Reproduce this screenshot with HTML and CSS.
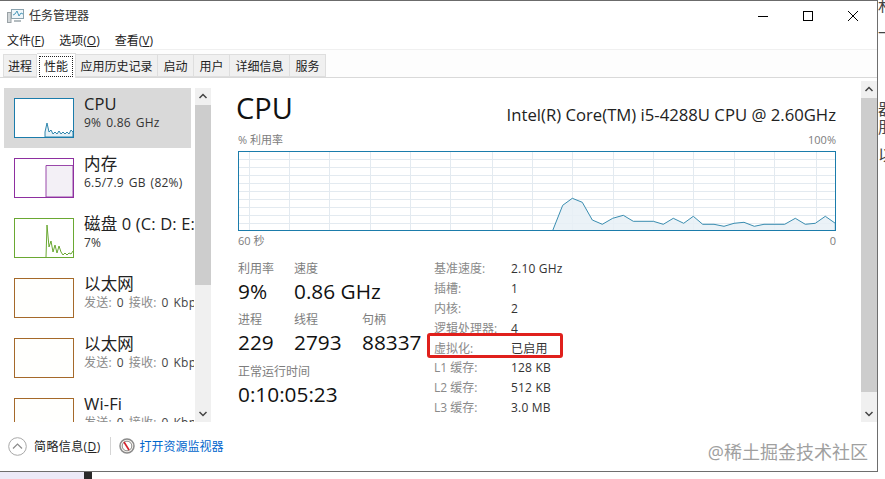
FILE: index.html
```html
<!DOCTYPE html>
<html lang="zh">
<head>
<meta charset="utf-8">
<title>任务管理器</title>
<link rel="stylesheet" href="styles.css">
</head>
<body>
<div class="desktop">
  <div class="window">
    <header class="titlebar">
      <svg class="app-icon" viewBox="0 0 17 14"><rect x="4.500" y="0.500" width="12" height="9" fill="#f0f7fb" stroke="#8ba3af"/><path d="M6 6l2-1 2-3 2 5 2-3 2 1" fill="none" stroke="#4a9abb"/><rect x="0.500" y="3.500" width="3.500" height="10" fill="#d2d7d9" stroke="#9aa2a6"/><path d="M7 11h7v2H7z" fill="#b4bcc0"/></svg>
      <span class="title">任务管理器</span>
      <div class="controls">
        <svg class="ctl" viewBox="0 0 46 30"><path d="M18 15.500h10" stroke="#000"/></svg>
        <svg class="ctl" viewBox="0 0 46 30"><rect x="18.500" y="10.500" width="9" height="9" fill="none" stroke="#000"/></svg>
        <svg class="ctl" viewBox="0 0 46 30"><path d="M18 10l10 10M28 10L18 20" stroke="#000"/></svg>
      </div>
    </header>
    <nav class="menu"><span>文件(<u>F</u>)</span><span>选项(<u>O</u>)</span><span>查看(<u>V</u>)</span></nav>
    <div class="tabs">
      <span class="tab">进程</span>
      <span class="tab active"><span class="focus">性能</span></span>
      <span class="tab">应用历史记录</span>
      <span class="tab">启动</span>
      <span class="tab">用户</span>
      <span class="tab">详细信息</span>
      <span class="tab">服务</span>
    </div>
    <main class="main">
      <aside class="side">
        <div class="list">
          <div class="item selected">
            <svg class="thumb cpu" viewBox="0 0 58 38"><path d="M30 38V33L32 24 34 33 36 31 38 35 40 33 42 35 44 32 46 35 48 33 50 35 52 33 54 35 56 31 58 33V38Z" fill="#e6f1f7" stroke="#2f86ad"/></svg>
            <div class="meta"><div class="name">CPU</div><div class="sub dark">9% 0.86 GHz</div></div>
          </div>
          <div class="item">
            <svg class="thumb mem" viewBox="0 0 58 38"><path d="M31 38V6.500H58V38Z" fill="#f3f0f6" stroke="#9a48aa"/></svg>
            <div class="meta"><div class="name">内存</div><div class="sub dark">6.5/7.9 GB (82%)</div></div>
          </div>
          <div class="item">
            <svg class="thumb disk" viewBox="0 0 58 38"><path d="M31 38L32 6 34 28 36 22 38 33 40 26 42 34 44 27 46 33 48 36 50 34 52 36 54 34 56 35 58 32" fill="none" stroke="#6aa832"/></svg>
            <div class="meta"><div class="name">磁盘 0 (C: D: E:</div><div class="sub dark">7%</div></div>
          </div>
          <div class="item">
            <div class="thumb net"></div>
            <div class="meta"><div class="name">以太网</div><div class="sub"><span class="soft">发送:</span> 0 <span class="soft">接收:</span> 0 Kbps</div></div>
          </div>
          <div class="item">
            <div class="thumb net"></div>
            <div class="meta"><div class="name">以太网</div><div class="sub"><span class="soft">发送:</span> 0 <span class="soft">接收:</span> 0 Kbps</div></div>
          </div>
          <div class="item">
            <div class="thumb net"></div>
            <div class="meta"><div class="name">Wi-Fi</div><div class="sub"><span class="soft">发送:</span> 0 <span class="soft">接收:</span> 0 Kbps</div></div>
          </div>
        </div>
        <div class="scrollbar short">
          <svg class="arrow" viewBox="0 0 16 17"><path d="M4.500 10L8 6.500 11.500 10" fill="none" stroke="#444" stroke-width="1.500"/></svg>
          <div class="track"><div class="bar"></div></div>
          <svg class="arrow" viewBox="0 0 16 17"><path d="M4.500 7L8 10.500 11.500 7" fill="none" stroke="#444" stroke-width="1.500"/></svg>
        </div>
      </aside>
      <section class="panel">
        <div class="head"><h1>CPU</h1><div class="model">Intel(R) Core(TM) i5-4288U CPU @ 2.60GHz</div></div>
        <div class="axis top"><span>% 利用率</span><span>100%</span></div>
        <svg class="chart" viewBox="238 151 598 80">
          <rect x="238.500" y="151.500" width="597" height="79" fill="#fff"/>
          <path class="grid" d="M239 159.500H835M239 167.500H835M239 175.500H835M239 183.500H835M239 191.500H835M239 199.500H835M239 207.500H835M239 215.500H835M239 223.500H835M249.500 152V230M289.500 152V230M329.500 152V230M370.500 152V230M410.500 152V230M450.500 152V230M492.500 152V230M532.500 152V230M572.500 152V230M613.500 152V230M653.500 152V230M693.500 152V230M734.500 152V230M774.500 152V230M816.500 152V230"/>
          <path class="load" d="M552.700 230.500L562.700 205.300 572.300 198.300 582.300 202.300 592.300 220 602.300 224.300 612.700 218.300 623.300 215.300 633.300 221.300 653.300 221.300 663.300 224.300 673.300 218.300 683.700 223.300 693.300 216.300 702.700 224.300 714 224.300 724 226.300 734 223.300 744 222.300 754.300 226.300 764 224.300 784.700 224.300 795.300 218.300 805.300 224.300 815.300 223.300 825.300 216.300 835.300 223.300V230.500Z"/>
          <rect class="frame" x="238.500" y="151.500" width="597" height="79"/>
        </svg>
        <div class="axis bottom"><span>60 秒</span><span>0</span></div>
        <div class="stats">
          <div class="live">
            <div class="row r1">
              <div class="stat"><label>利用率</label><b>9%</b></div>
              <div class="stat"><label>速度</label><b>0.86 GHz</b></div>
            </div>
            <div class="row r2">
              <div class="stat"><label>进程</label><b>229</b></div>
              <div class="stat"><label>线程</label><b>2793</b></div>
              <div class="stat"><label>句柄</label><b>88337</b></div>
            </div>
            <div class="stat"><label>正常运行时间</label><b>0:10:05:23</b></div>
          </div>
          <dl class="specs">
            <dt>基准速度:</dt><dd>2.10 GHz</dd>
            <dt>插槽:</dt><dd>1</dd>
            <dt>内核:</dt><dd>2</dd>
            <dt>逻辑处理器:</dt><dd>4</dd>
            <dt>虚拟化:</dt><dd>已启用</dd>
            <dt>L1 缓存:</dt><dd>128 KB</dd>
            <dt>L2 缓存:</dt><dd>512 KB</dd>
            <dt>L3 缓存:</dt><dd>3.0 MB</dd>
          </dl>
        </div>
        <div class="scrollbar tall">
          <svg class="arrow" viewBox="0 0 16 17"><path d="M4.500 10L8 6.500 11.500 10" fill="none" stroke="#444" stroke-width="1.500"/></svg>
          <div class="track"><div class="bar"></div></div>
          <svg class="arrow" viewBox="0 0 16 17"><path d="M4.500 7L8 10.500 11.500 7" fill="none" stroke="#444" stroke-width="1.500"/></svg>
        </div>
      </section>
    </main>
    <footer class="footer">
      <svg class="fold" viewBox="0 0 19 19"><circle cx="9.500" cy="9.500" r="8.800" fill="#fff" stroke="#a8a8a8"/><path d="M5 11.500L9.500 7 14 11.500" fill="none" stroke="#8c8c8c" stroke-width="1.200"/></svg>
      <span class="brief">简略信息(<u>D</u>)</span>
      <i class="sep"></i>
      <svg class="gauge" viewBox="0 0 16 16"><circle cx="8" cy="8" r="7" fill="#f6f3ee" stroke="#8a8a8a" stroke-width="1.500"/><circle cx="8" cy="8" r="4.800" fill="#fff" stroke="#444" stroke-width=".6"/><path d="M5 4l5 8" stroke="#d4202a" stroke-width="1.600"/></svg>
      <a class="monitor">打开资源监视器</a>
    </footer>
    <div class="watermark">@稀土掘金技术社区</div>
    <div class="redbox"></div>
  </div>
  <div class="behind"><div class="f1">和</div><div class="f2">一</div><div class="f3">器</div><div class="f4">朋</div><div class="f5">以何</div></div>
</div>
<div class="strip"><i class="lav"></i><i class="blk"></i></div>
</body>
</html>
```
FILE: styles.css
```css
* { box-sizing: border-box; }
html, body { margin: 0; padding: 0; }
body { width: 885px; height: 479px; overflow: hidden; background: #fff; font-family: "Open Sans", "Noto Sans CJK SC", sans-serif; font-size: 12px; color: #1a1a1a; }
.desktop { display: flex; height: 472px; }
.window { position: relative; flex: none; width: 878px; height: 472px; display: flex; flex-direction: column; background: #fff; border-top: 1px solid #6b6b6b; border-right: 1px solid #6e6e6e; border-bottom: 1px solid #6e6e6e; }
.behind { width: 7px; overflow: hidden; font-size: 16px; line-height: 16px; color: #444; white-space: nowrap; }
.f1 { margin-top: -3px; }
.f2 { margin-top: 12px; }
.f3 { margin-top: 60px; }
.f4 { margin-top: 2px; }
.f5 { margin-top: 12px; }
.strip { display: flex; height: 7px; }
.strip i { display: block; height: 7px; }
.lav { width: 84px; background: #eceaf8; }
.blk { width: 8px; background: #2a2a2a; }

.titlebar { display: flex; align-items: center; height: 29px; padding: 0 0 2px 7px; flex: none; }
.app-icon { width: 17px; height: 14px; margin-top: 3px; }
.title { margin-left: 5px; color: #333; }
.controls { margin-left: auto; display: flex; margin-right: 1px; margin-top: 2px; }
.ctl { width: 46px; height: 30px; margin-left: -1px; }

.menu { display: flex; height: 20px; flex: none; align-items: center; padding-left: 7px; gap: 15px; border-bottom: 1px solid #f0f0f0; color: #222; }
.tabs { display: flex; align-items: flex-end; height: 28px; flex: none; padding: 0 0 0 3px; border-bottom: 1px solid #d9d9d9; background: #fdfdfd; }
.tab { display: flex; align-items: center; justify-content: center; height: 23px; padding: 0 5.500px; background: #f0f0f0; border: 1px solid #dedede; border-left: 0; color: #222; }
.tab:first-child { border-left: 1px solid #dedede; padding: 0 4px; }
.tab:nth-child(3) { padding: 0 4.500px; }
.tab.active { height: 25px; margin-bottom: -1px; background: #fff; border-bottom: 0; padding: 0 2px; }
.focus { border: 1px dotted #222; padding: 0 4px; line-height: 19px; }

.main { display: flex; flex: 1; min-height: 0; }
.side { display: flex; width: 212px; flex: none; padding: 10px 0 0 4px; overflow: hidden; }
.list { width: 190px; height: 334px; overflow: hidden; flex: none; }
.item { display: flex; width: 187px; height: 60px; padding: 10px 0 0 10px; }
.item.selected { background: #d9d9d9; }
.thumb { display: block; width: 60px; height: 40px; flex: none; border: 1px solid; background: #fff; }
.cpu { border-color: #1b7cab; }
.mem { border-color: #8e2fa0; }
.disk { border-color: #6aa832; }
.net { border-color: #a5692a; background: #fffffd; }
.meta { margin-left: 10px; white-space: nowrap; flex: none; width: 110px; }
.name { font-size: 16.500px; line-height: 22px; margin-top: -5px; color: #222; letter-spacing: .15px; }
.sub { line-height: 15px; margin-top: 0; color: #444; letter-spacing: .25px; word-spacing: 1.500px; }
.sub.dark { color: #333; }
.soft { color: #8a8a8a; }

.scrollbar { display: flex; flex-direction: column; width: 16px; height: 334px; margin-left: 1px; background: #f0f0f0; flex: none; }
.arrow { display: block; width: 16px; height: 17px; flex: none; }
.track { flex: 1; min-height: 0; }
.bar { background: #cdcdcd; }
.short .bar { height: 180px; }

.panel { position: relative; flex: 1; display: flex; flex-direction: column; padding: 12px 0 0 26px; min-width: 0; }
.scrollbar.tall { position: absolute; right: 0; top: 3px; margin: 0; height: 341px; }
.tall .bar { height: 294px; }
.head { display: flex; align-items: flex-end; justify-content: space-between; width: 598px; height: 41px; }
h1 { margin: 0 0 5px -2px; font-size: 29px; font-weight: 400; line-height: 36px; color: #111; }
.model { font-size: 16.700px; line-height: 26px; margin-bottom: 3px; color: #222; }
.axis { display: flex; justify-content: space-between; width: 598px; font-size: 11px; color: #7d7d7d; line-height: 14px; }
.axis.top { margin-top: 2px; margin-bottom: 4px; }
.axis.bottom { margin-top: 3px; }
.chart { display: block; width: 598px; height: 80px; flex: none; }
.grid { fill: none; stroke: #e3eaf0; stroke-width: 1; }
.load { fill: #e8f0f6; fill-opacity: .85; stroke: #3a8db0; stroke-width: 1; }
.frame { fill: none; stroke: #1b7cab; stroke-width: 1; }

.stats { display: flex; margin-top: 13px; }
.live { width: 196px; flex: none; }
.row { display: flex; }
.r1 { margin-bottom: 7px; }
.r1 .stat:first-child { width: 56px; }
.r2 { margin-bottom: 8px; }
.r2 .stat:first-child { width: 56px; }
.r2 .stat:nth-child(2) { width: 68px; }
.stat { white-space: nowrap; }
.stat label { display: block; color: #7d7d7d; line-height: 16px; }
.stat b { display: block; font-weight: 400; font-size: 20.800px; line-height: 28px; color: #111; }
.specs { display: grid; grid-template-columns: 77px auto; grid-auto-rows: 19.900px; margin: -2px 0 0; line-height: 20px; }
.specs dt { color: #8a8a8a; white-space: nowrap; }
.specs dd { margin: 0; color: #333; white-space: nowrap; letter-spacing: .2px; }

.footer { height: 49px; flex: none; display: flex; align-items: center; padding: 0 0 1px 8px; }
.fold { width: 19px; height: 19px; }
.brief { margin-left: 7px; color: #222; letter-spacing: .4px; }
.sep { display: block; width: 1px; height: 18px; margin-left: 9px; background: #d5d5d5; }
.gauge { width: 16px; height: 16px; margin-left: 8px; }
.monitor { margin-left: 5px; color: #0066cc; }

.watermark { position: absolute; right: 9px; bottom: 8px; font-size: 18px; line-height: 22px; color: #a0a0a0; }
.redbox { position: absolute; left: 427px; top: 332px; width: 136px; height: 25px; border: 3px solid #e0201c; border-radius: 3px; }
```
